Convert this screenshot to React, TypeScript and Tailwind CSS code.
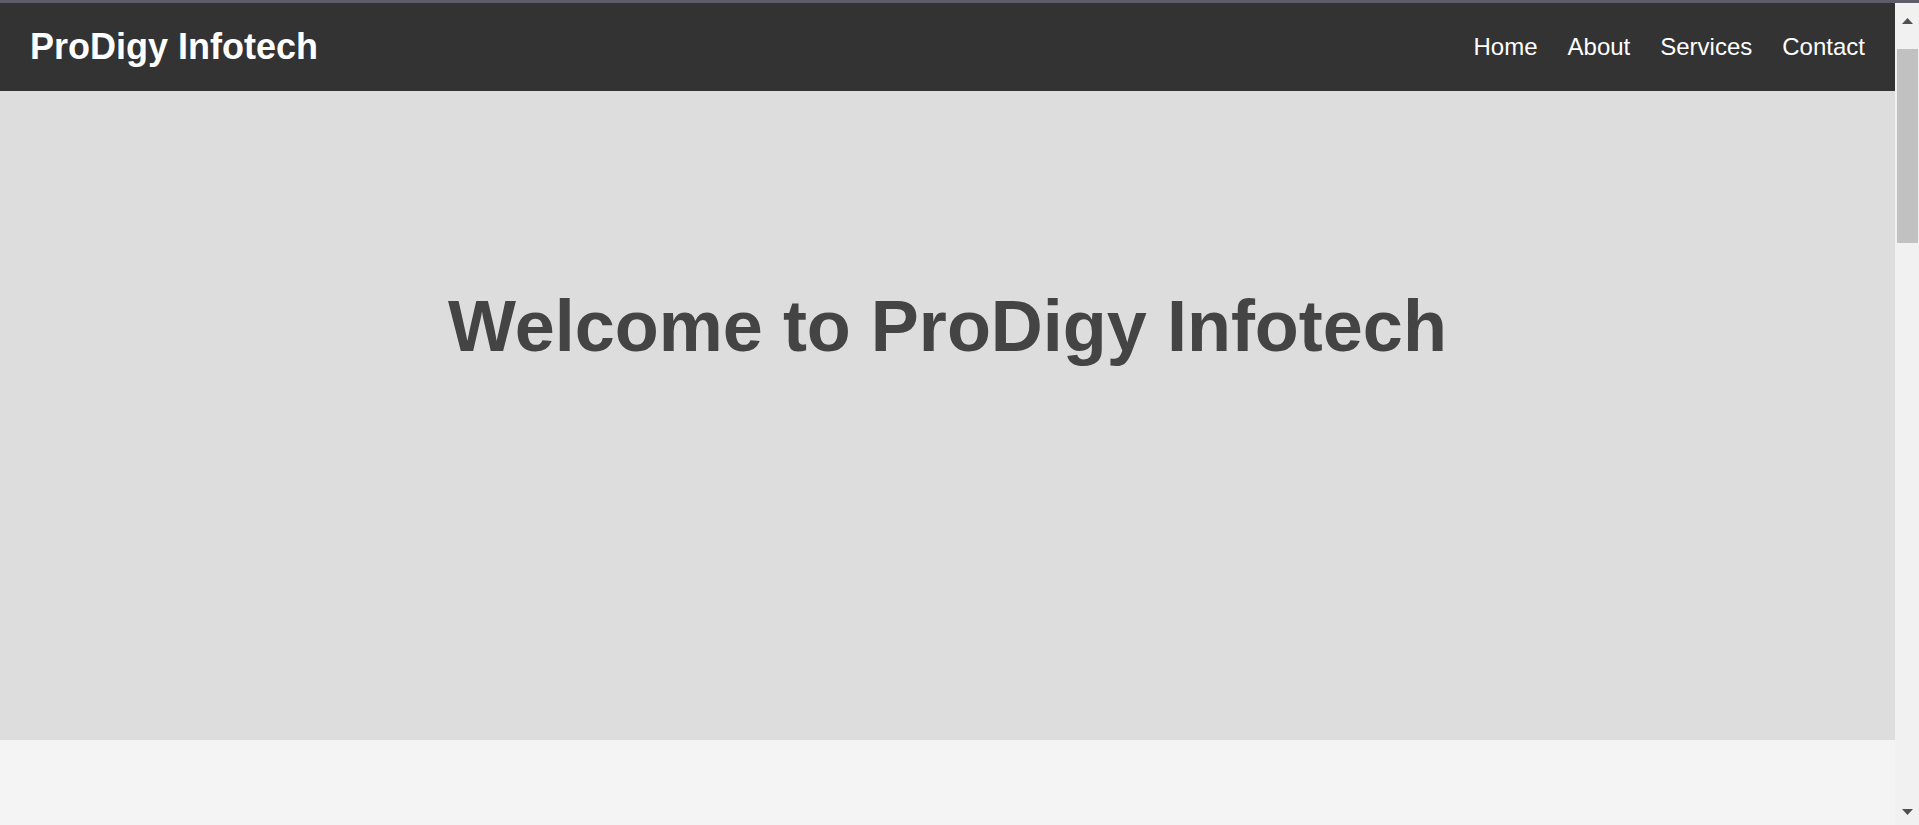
export default function App() {
  return (
    <div
      className="flex h-[825px] w-full flex-col overflow-hidden bg-[#f4f4f4]"
      style={{ fontFamily: '"Liberation Sans", Arial, sans-serif' }}
    >
      <div className="h-[3px] w-full shrink-0 bg-[#5d5d6a]" />
      <div className="flex min-h-0 flex-1">
        <div className="flex min-w-0 flex-1 flex-col">
          <header className="flex h-[88px] shrink-0 items-center justify-between bg-[#333333] px-[30px]">
            <div className="text-[36px] font-bold leading-none text-white">ProDigy Infotech</div>
            <nav className="flex items-center gap-[30px] text-[24px] leading-none text-white">
              <a href="#">Home</a>
              <a href="#">About</a>
              <a href="#">Services</a>
              <a href="#">Contact</a>
            </nav>
          </header>
          <section className="flex h-[649px] shrink-0 justify-center bg-[#dddddd] pt-[194px]">
            <h1 className="text-[72px] font-bold leading-[83px] text-[#444444]">
              Welcome to ProDigy Infotech
            </h1>
          </section>
          <div className="flex-1 bg-[#f4f4f4]" />
        </div>
        <div className="flex w-[24px] shrink-0 flex-col bg-[#f1f1f1]">
          <div className="flex h-[24px] items-end justify-center pb-[3px] pl-[1px]">
            <svg width="11" height="6" viewBox="0 0 11 6">
              <polygon points="5.5,0 11,6 0,6" fill="#505050" />
            </svg>
          </div>
          <div className="ml-[2px] mr-[1px] mt-[22px] h-[194px] bg-[#c1c1c1]" />
          <div className="flex-1" />
          <div className="flex h-[22px] items-start justify-center pl-[1px] pt-[6px]">
            <svg width="11" height="6" viewBox="0 0 11 6">
              <polygon points="0,0 11,0 5.5,6" fill="#505050" />
            </svg>
          </div>
        </div>
      </div>
    </div>
  );
}
